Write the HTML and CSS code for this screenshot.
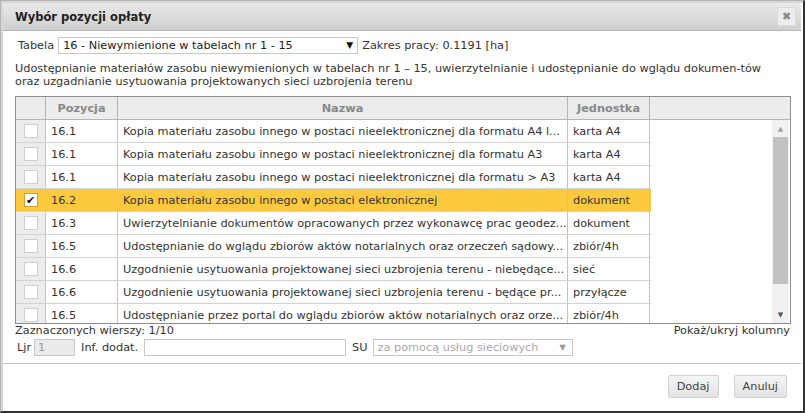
FILE: index.html
```html
<!DOCTYPE html>
<html lang="pl">
<head>
    <meta charset="UTF-8">
    <title>Wybór pozycji opłaty</title>
    <link rel="stylesheet" href="styles.css">
</head>
<body>
    <div class="dialog">
        <div class="titlebar">
            <span class="title">Wybór pozycji opłaty</span>
            <span class="close">&#10006;</span>
        </div>

        <div class="content">
            <div class="row-table">
                <label>Tabela</label>
                <div class="select main-select">
                    <span>16 - Niewymienione w tabelach nr 1 - 15</span>
                    <span class="arrow">&#9660;</span>
                </div>
                <span>Zakres pracy: 0.1191 [ha]</span>
            </div>

            <p class="desc">Udostępnianie materiałów zasobu niewymienionych w tabelach nr 1 – 15, uwierzytelnianie i udostępnianie do wglądu dokumen-tów oraz uzgadnianie usytuowania projektowanych sieci uzbrojenia terenu</p>

            <div class="grid">
                <div class="grid-head">
                    <div class="hc c-chk"></div>
                    <div class="hc c-poz">Pozycja</div>
                    <div class="hc c-naz">Nazwa</div>
                    <div class="hc c-jed">Jednostka</div>
                    <div class="hc c-rest"></div>
                </div>
                <div class="grid-body">
                    <div class="rows">
                        <div class="r"><div class="c-chk"><span class="box"></span></div><div class="c-poz">16.1</div><div class="c-naz">Kopia materiału zasobu innego w postaci nieelektronicznej dla formatu A4 l...</div><div class="c-jed">karta A4</div></div>
                        <div class="r"><div class="c-chk"><span class="box"></span></div><div class="c-poz">16.1</div><div class="c-naz">Kopia materiału zasobu innego w postaci nieelektronicznej dla formatu A3</div><div class="c-jed">karta A4</div></div>
                        <div class="r"><div class="c-chk"><span class="box"></span></div><div class="c-poz">16.1</div><div class="c-naz">Kopia materiału zasobu innego w postaci nieelektronicznej dla formatu &gt; A3</div><div class="c-jed">karta A4</div></div>
                        <div class="r selected"><div class="c-chk"><span class="box checked">&#10004;</span></div><div class="c-poz">16.2</div><div class="c-naz">Kopia materiału zasobu innego w postaci elektronicznej</div><div class="c-jed">dokument</div></div>
                        <div class="r"><div class="c-chk"><span class="box"></span></div><div class="c-poz">16.3</div><div class="c-naz">Uwierzytelnianie dokumentów opracowanych przez wykonawcę prac geodez...</div><div class="c-jed">dokument</div></div>
                        <div class="r"><div class="c-chk"><span class="box"></span></div><div class="c-poz">16.5</div><div class="c-naz">Udostępnianie do wglądu zbiorów aktów notarialnych oraz orzeczeń sądowy...</div><div class="c-jed">zbiór/4h</div></div>
                        <div class="r"><div class="c-chk"><span class="box"></span></div><div class="c-poz">16.6</div><div class="c-naz">Uzgodnienie usytuowania projektowanej sieci uzbrojenia terenu - niebędące...</div><div class="c-jed">sieć</div></div>
                        <div class="r"><div class="c-chk"><span class="box"></span></div><div class="c-poz">16.6</div><div class="c-naz">Uzgodnienie usytuowania projektowanej sieci uzbrojenia terenu - będące pr...</div><div class="c-jed">przyłącze</div></div>
                        <div class="r"><div class="c-chk"><span class="box"></span></div><div class="c-poz">16.5</div><div class="c-naz">Udostępnianie przez portal do wglądu zbiorów aktów notarialnych oraz orze...</div><div class="c-jed">zbiór/4h</div></div>
                    </div>
                    <div class="scrollbar">
                        <span class="sb-arrow">&#9650;</span>
                        <div class="sb-track"><div class="sb-thumb"></div></div>
                        <span class="sb-arrow">&#9660;</span>
                    </div>
                </div>
            </div>

            <div class="grid-foot">
                <span>Zaznaczonych wierszy: 1/10</span>
                <span>Pokaż/ukryj kolumny</span>
            </div>

            <div class="row-extra">
                <label>Ljr</label>
                <div class="input ljr">1</div>
                <label>Inf. dodat.</label>
                <div class="input inf"></div>
                <label>SU</label>
                <div class="select su-select">
                    <span>za pomocą usług sieciowych</span>
                    <span class="arrow">&#9660;</span>
                </div>
            </div>
        </div>

        <div class="buttons">
            <button>Dodaj</button>
            <button>Anuluj</button>
        </div>
    </div>
</body>
</html>
```

FILE: styles.css
```css
* {
    margin: 0;
    padding: 0;
    box-sizing: border-box;
}

body {
    font-family: "DejaVu Sans", Verdana, sans-serif;
    font-size: 11.3px;
    color: #333;
    background: #fff;
}

.dialog {
    width: 805px;
    height: 413px;
    border: 1px solid #b5b5b5;
    border-right: 2px solid #333;
    border-bottom: 2px solid #333;
    background: #fff;
    display: flex;
    flex-direction: column;
    box-shadow: inset 2px 2px 0 #d6d6d6;
}

.titlebar {
    height: 28px;
    margin: 2px 2px 0 2px;
    background: linear-gradient(#e9e9e9, #cfcfcf);
    border-bottom: 1px solid #b8b8b8;
    display: flex;
    align-items: center;
    justify-content: space-between;
    padding: 0 5px 0 12px;
}

.title {
    font-weight: bold;
    font-size: 11.5px;
    color: #222;
}

.close {
    width: 19px;
    height: 19px;
    background: #ededed;
    border: 1px solid #dadada;
    color: #888;
    font-size: 11px;
    display: flex;
    align-items: center;
    justify-content: center;
}

.content {
    padding: 5px 13px 0 12px;
    border-bottom: 1px solid #c4c4c4;
    margin: 0 2px;
    height: 333px;
}

.row-table {
    display: flex;
    align-items: center;
    gap: 4px;
    height: 18px;
}

.row-table label {
    margin-left: 3px;
}

.select {
    height: 17px;
    border: 1px solid #c8c8c8;
    display: flex;
    align-items: center;
    justify-content: space-between;
    padding: 0 4px 0 4px;
    background: #fff;
}

.main-select {
    width: 300px;
    color: #222;
}

.main-select .arrow {
    font-size: 9px;
    color: #111;
}

.desc {
    margin-top: 8px;
    line-height: 13px;
    color: #333;
    max-width: 765px;
}

.grid {
    margin-top: 8px;
    border: 1px solid #8e8e8e;
    width: 776px;
}

.grid-head {
    display: flex;
    height: 23px;
    background: #ececec;
    border-bottom: 1px solid #b5b5b5;
}

.hc {
    display: flex;
    align-items: center;
    justify-content: center;
    font-weight: bold;
    color: #888;
    border-right: 1px solid #b5b5b5;
}

.hc.c-rest {
    flex: 1;
    border-right: none;
}

.c-chk { width: 30px; flex: none; }
.c-poz { width: 72px; flex: none; }
.c-naz { width: 450px; flex: none; }
.c-jed { width: 82px; flex: none; }

.grid-body {
    display: flex;
    height: 203px;
    overflow: hidden;
}

.rows {
    width: 635px;
}

.r {
    display: flex;
    height: 23px;
    border-bottom: 1px solid #d2d2d2;
}

.r > div {
    display: flex;
    align-items: center;
    border-right: 1px solid #c4c4c4;
    padding-left: 5px;
    white-space: nowrap;
    overflow: hidden;
}

.r > .c-chk {
    background: #ececec;
    justify-content: center;
    padding-left: 0;
}

.r.selected {
    background: #fdc93f;
}

.r.selected > .c-chk {
    background: #fdc93f;
}

.box {
    width: 14px;
    height: 14px;
    background: #fff;
    border: 1px solid #cfcfcf;
    display: flex;
    align-items: center;
    justify-content: center;
    font-size: 11px;
    color: #111;
}

.box.checked {
    border-color: #c9a22f;
}

.scrollbar {
    margin-left: auto;
    width: 17px;
    margin-right: 1px;
    display: flex;
    flex-direction: column;
    align-items: center;
    background: #f1f1f1;
}

.sb-arrow {
    height: 17px;
    font-size: 7px;
    color: #a3a3a3;
    display: flex;
    align-items: center;
}

.sb-arrow:last-child {
    color: #555;
}

.sb-track {
    flex: 1;
    width: 100%;
    padding: 0 1px;
}

.sb-thumb {
    height: 147px;
    background: #c1c1c1;
}

.grid-foot {
    display: flex;
    justify-content: space-between;
    width: 775px;
    margin-top: 0;
}

.row-extra {
    display: flex;
    align-items: center;
    gap: 6px;
    margin-top: 2px;
    padding-left: 2px;
}

.input {
    height: 17px;
    border: 1px solid #c8c8c8;
    padding: 1px 3px;
}

.ljr {
    width: 41px;
    background: #ebebe9;
    color: #999;
    margin-left: -3px;
}

.inf {
    width: 202px;
}

.su-select {
    width: 200px;
    color: #aaa;
    margin-left: -1px;
}

.su-select .arrow {
    font-size: 8px;
    color: #999;
    margin-right: 2px;
}

.buttons {
    display: flex;
    justify-content: flex-end;
    gap: 15px;
    padding: 11px 16px 0 0;
}

button {
    font-family: inherit;
    font-size: 11.3px;
    color: #444;
    height: 23px;
    padding: 0 8px;
    border: 1px solid #d2d2d2;
    border-radius: 2px;
    background: linear-gradient(#f5f5f5, #e3e3e3);
}
```
